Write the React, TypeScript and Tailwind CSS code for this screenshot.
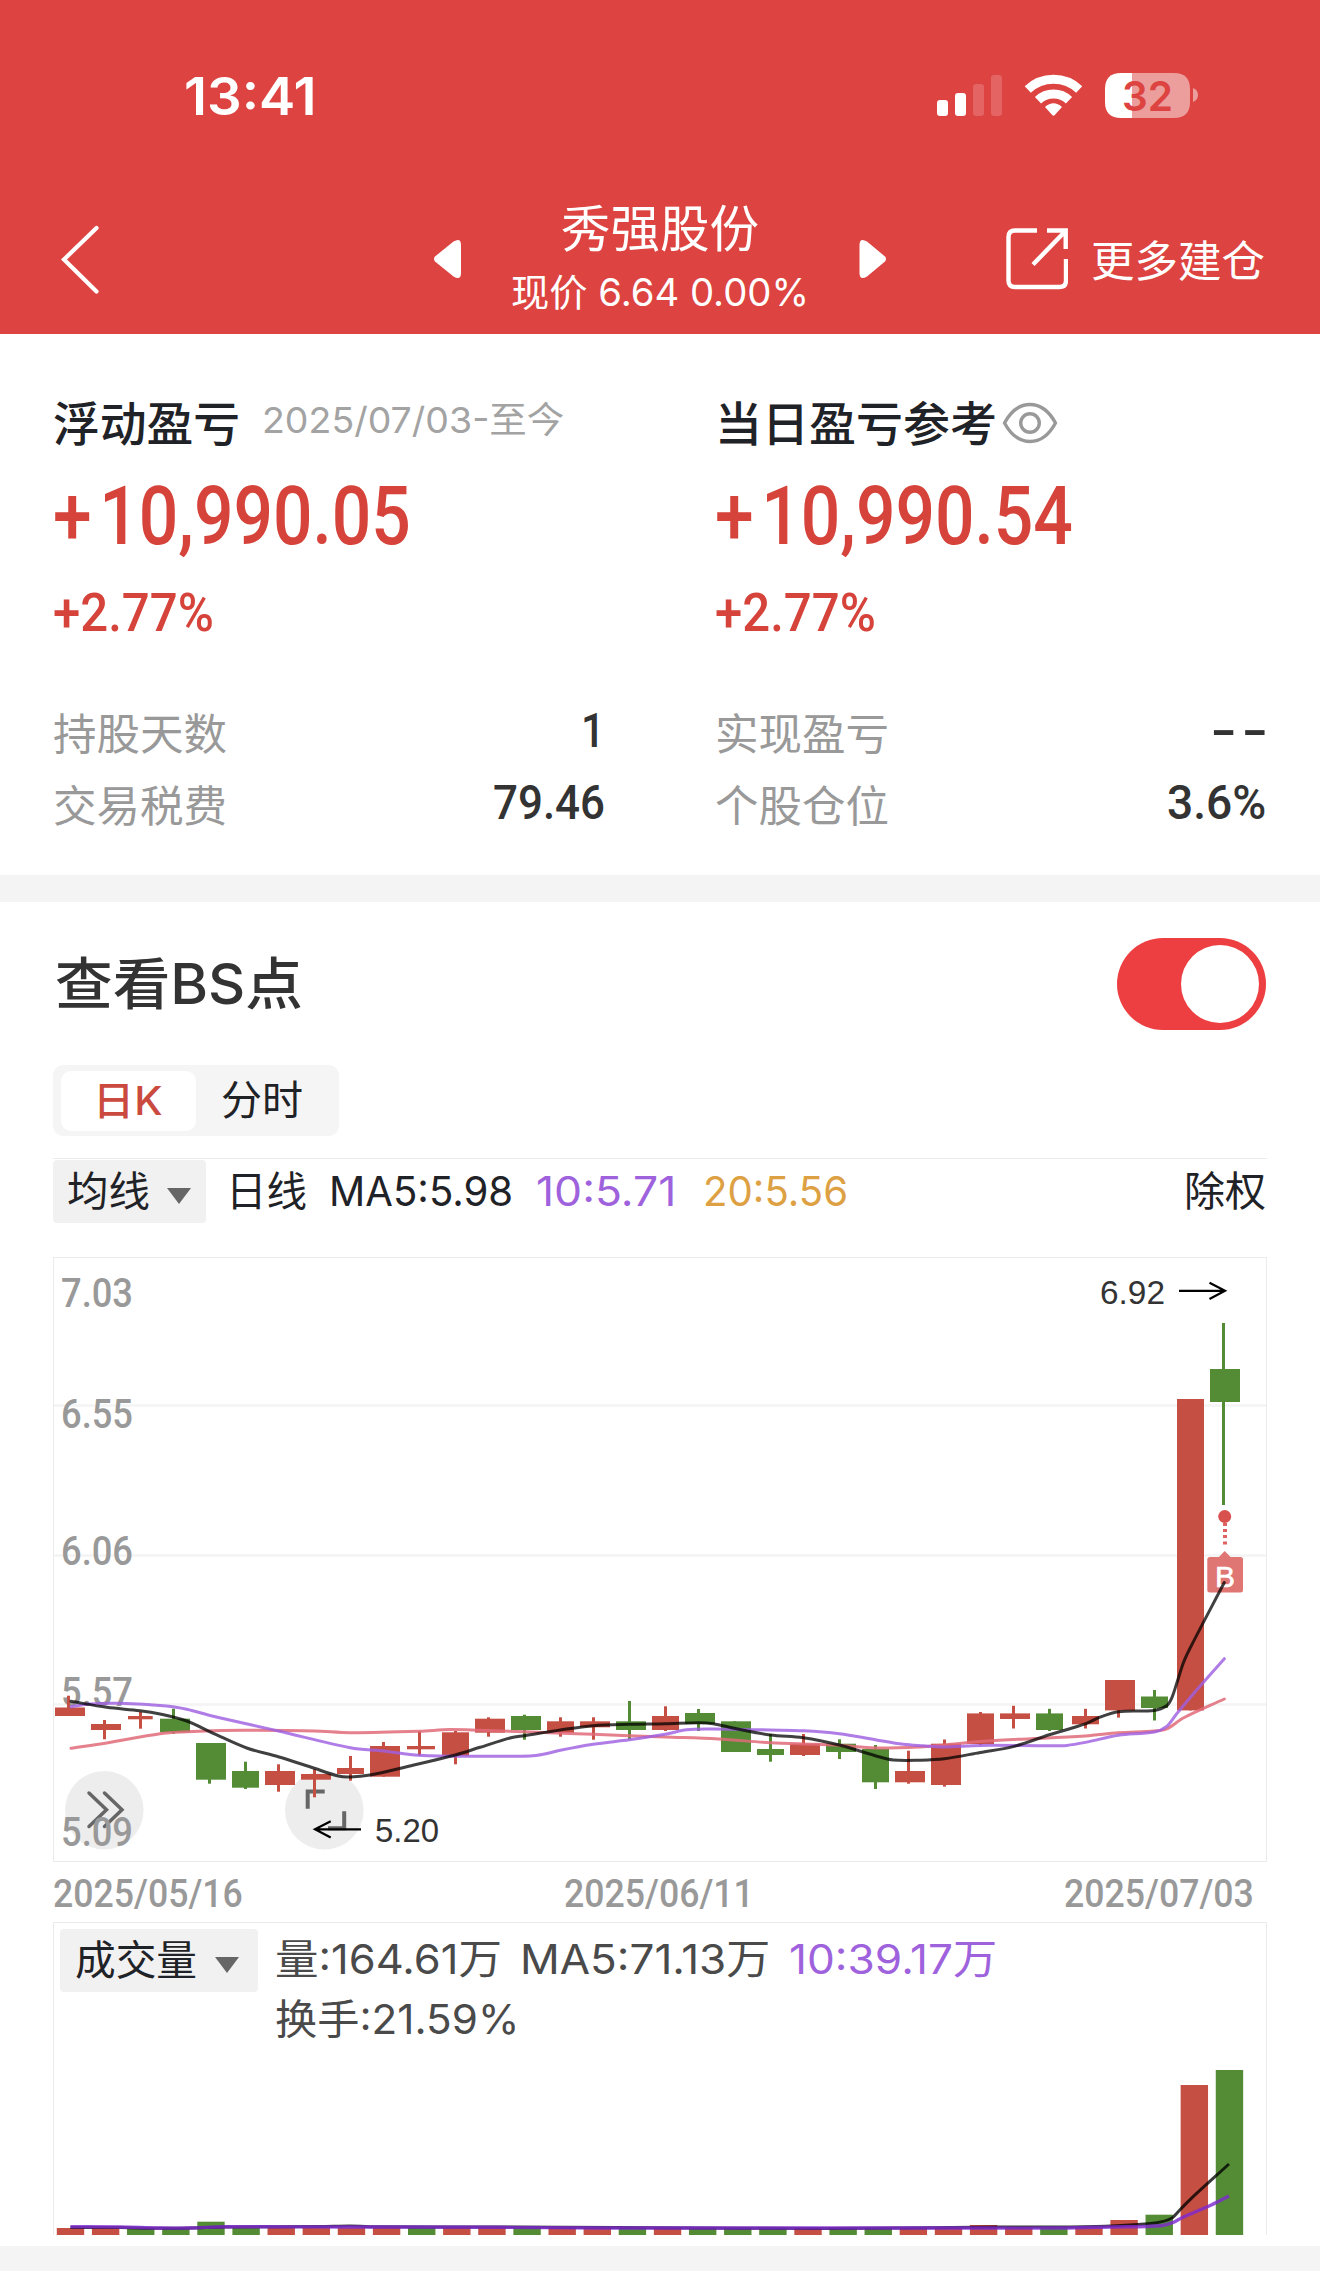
import { useLayoutEffect, useRef, useState } from "react";
import type { ReactNode } from "react";

const RED = "#c54f43";
const GREEN = "#548c36";

const CJK = "font-['Noto_Sans_CJK_SC',sans-serif]";
const MIX = "font-['Inter','Noto_Sans_CJK_SC',sans-serif]";
const DIN = "font-['Roboto',sans-serif]";

/** Single line of text condensed or widened so that it fills its box. */
function Fit({ className, children }: { className: string; children: ReactNode }) {
  const box = useRef<HTMLSpanElement>(null);
  const text = useRef<HTMLSpanElement>(null);
  const [scale, setScale] = useState(1);
  useLayoutEffect(() => {
    if (box.current && text.current) setScale(box.current.clientWidth / text.current.offsetWidth);
  }, []);
  return (
    <span ref={box} className={`block shrink-0 whitespace-nowrap ${className}`}>
      <span ref={text} className="inline-block origin-left" style={{ transform: `scaleX(${scale})` }}>
        {children}
      </span>
    </span>
  );
}

type Candle = [string, number, number, number, number, number, number, number];

// colour, body left, body right, body top, body bottom, wick x, wick top, wick bottom
const candles: Candle[] = [
  ["r", 55, 85, 1707.5, 1716, 68.5, 1695.7, 1716],
  ["r", 91, 121, 1724, 1730, 104.5, 1720, 1739.3],
  ["r", 128, 152.7, 1716, 1719.3, 140.5, 1712, 1728.7],
  ["g", 160, 190, 1718.7, 1732.3, 173.5, 1708.7, 1733.7],
  ["g", 196, 226, 1743, 1779.7, 209.5, 1743, 1783.7],
  ["g", 232, 259, 1771, 1787.7, 245.5, 1761.7, 1789],
  ["r", 265, 295, 1771, 1785, 278.5, 1764.3, 1791.7],
  ["r", 301, 331, 1774, 1779.7, 314.5, 1769.3, 1797.3],
  ["r", 337, 364, 1768, 1774, 350.5, 1756, 1780.7],
  ["r", 370, 400, 1746, 1776.7, 383.5, 1742, 1776.7],
  ["r", 407, 435, 1746, 1749.3, 419.5, 1731.3, 1755.7],
  ["r", 442, 469, 1732.3, 1755.7, 455.5, 1731, 1764.3],
  ["r", 475, 505, 1718.7, 1732.7, 488.5, 1717.3, 1736.7],
  ["g", 511, 541, 1716, 1730, 524.5, 1714.7, 1739.7],
  ["r", 547, 574, 1721.3, 1732.7, 560.5, 1717.3, 1736.7],
  ["r", 580, 610, 1721.3, 1727.3, 593.5, 1717.3, 1739.7],
  ["g", 616, 646, 1721.3, 1730, 629.5, 1701, 1739.3],
  ["r", 652, 679, 1716, 1730, 665.5, 1706.3, 1731],
  ["g", 685, 715, 1713, 1724, 698.5, 1709, 1731],
  ["g", 721, 751, 1721.3, 1752, 734.5, 1721.3, 1752],
  ["g", 757, 784, 1749, 1755, 770.5, 1734, 1761.7],
  ["r", 790, 820, 1743.7, 1755, 803.5, 1734, 1756],
  ["g", 826, 856, 1743.7, 1752, 839.5, 1739.3, 1759],
  ["g", 862, 889, 1749, 1782.3, 875.5, 1745, 1789],
  ["r", 895, 925, 1771, 1782.3, 908.5, 1750.7, 1783.7],
  ["r", 931, 961, 1743.7, 1785, 944.5, 1739.5, 1786.6],
  ["r", 967, 994, 1713.4, 1744, 980.5, 1712, 1745],
  ["r", 1000, 1030, 1713.4, 1719, 1013.5, 1705.8, 1728.5],
  ["g", 1036, 1063, 1713.4, 1730, 1049.5, 1708.8, 1731],
  ["r", 1072, 1099, 1716, 1724.3, 1085.5, 1708.8, 1728.5],
  ["r", 1105, 1135, 1680, 1710.4, 1118.5, 1680, 1717.6],
  ["g", 1141, 1168, 1696.5, 1708, 1154.5, 1690, 1720.5],
  ["r", 1177, 1204, 1399, 1710.4, 1190.5, 1399, 1710.4],
  ["g", 1210, 1240, 1369, 1402, 1223.5, 1323, 1505],
];

const ma5 = [71,1701.3,106.7,1707.3,140,1710.7,160,1714,186.7,1721,213.3,1733.3,246.7,1748,278.3,1756.7,314.3,1768.3,338.3,1776,350.3,1777,370,1775,406.7,1766.7,455.3,1755,480,1747.3,511,1737.7,524.3,1735.7,560.3,1730,593.3,1725.7,629.3,1724.3,665.3,1723.7,698.3,1722.7,713.3,1723.7,734.3,1728.3,770.3,1735,803.3,1737.7,839.3,1745,875.3,1755.7,893.3,1760,920,1760.2,944.3,1758.8,980.3,1752.5,1013.3,1746.6,1049.3,1734.8,1085.3,1723.9,1100,1717.2,1118.3,1711.7,1154.3,1710.4,1166.7,1705.8,1171.7,1698.2,1176.7,1683.5,1183.3,1663,1190.3,1647.7,1224.3,1582.5];
const ma10 = [71,1706.7,90,1704,120,1703.3,166.7,1706,186.7,1709.3,213.3,1716.3,278.3,1731,350.3,1747.7,383.3,1751,419.3,1755.3,480,1756.3,530,1756,543.3,1754.3,560.3,1750.3,593.3,1744.3,629.3,1739.7,665.3,1734.3,686.7,1729.7,713.3,1729,770.3,1730,803.3,1730.7,839.3,1733.7,875.3,1739.7,903.3,1744.3,923.3,1745.8,944.3,1747,980.3,1745.4,1049.3,1745.8,1066.7,1745.4,1085.3,1742.4,1118.3,1735.3,1154.3,1731.9,1166.7,1726.4,1176.7,1713.8,1190.3,1697.4,1224.3,1658.7];
const ma20 = [71,1748.3,106.7,1743,160,1733.7,186.7,1731.7,213.3,1730.7,246.7,1730.3,314.3,1731,350.3,1732.7,419.3,1731.3,450,1729.5,480,1730.2,524.3,1731.7,593.3,1734.3,665.3,1737,718.3,1739,770.3,1742.7,813.3,1744.3,839.3,1745.3,875.3,1748,920,1747,944.3,1745,980.3,1741.6,1013.3,1739.5,1085.3,1736,1118.3,1732.7,1154.3,1731,1166.7,1729,1183.3,1718,1224.3,1699];

const volColors = "rrggggrrrrgrrgrrgrgggrggrrrrgrrgrg".split("");
const volTops: Record<number, number> = { 4: 2221.7, 26: 2225, 30: 2220, 31: 2214.7, 32: 2085, 33: 2070 };
const vol5 = [70.5,2227.5,120,2227.5,160,2228.3,190,2228,225,2227,320,2226.6,350,2226,380,2226.8,500,2227,700,2228,830,2228.5,1000,2227,1060,2227,1110,2226,1156.6,2222.7,1171.4,2218.3,1179.8,2210,1190.3,2199.3,1229,2164];
const vol10 = [70.5,2226.7,120,2227,160,2228,190,2228,225,2226.8,350,2227,500,2227.3,600,2228,830,2228,950,2228,1060,2228,1110,2227,1161,2225.7,1172.6,2222.7,1182,2217.7,1211.3,2205,1229,2196];

/** Smooth curve through a flat list of x, y pairs. */
function curve(p: number[]) {
  const n = p.length / 2;
  const at = (i: number) => {
    const k = Math.max(0, Math.min(n - 1, i));
    return [p[2 * k], p[2 * k + 1]];
  };
  let d = `M${p[0]} ${p[1]}`;
  for (let i = 0; i < n - 1; i++) {
    const [a, b, c, e] = [at(i - 1), at(i), at(i + 1), at(i + 2)];
    const h = (c[0] - b[0]) / 3;
    const m1 = (c[1] - a[1]) / (c[0] - a[0]);
    const m2 = (e[1] - b[1]) / (e[0] - b[0]);
    d += `C${b[0] + h} ${b[1] + m1 * h} ${c[0] - h} ${c[1] - m2 * h} ${c[0]} ${c[1]}`;
  }
  return d;
}

function StatusIcons() {
  return (
    <svg className="h-[60px] w-[262px] overflow-visible" viewBox="937 66 262 60">
      <g fill="#fff">
        <rect x="937" y="100" width="11" height="16" rx="3" />
        <rect x="955" y="93" width="11" height="23" rx="3" />
        <rect x="973" y="84" width="11" height="32" rx="3" opacity=".18" />
        <rect x="991" y="75" width="11" height="41" rx="3" opacity=".18" />
      </g>
      <g fill="none" stroke="#fff" strokeWidth="9">
        <path d="M1027.8 89.500 A37.500 37.500 0 0 1 1079.200 89.500" />
        <path d="M1038 100.300 A22.500 22.500 0 0 1 1069 100.300" />
      </g>
      <path d="M1045 107 Q1053.500 99.500 1062 107 L1054.800 115 Q1053.500 116.600 1052.200 115 Z" fill="#fff" />
      <path d="M1132 73H1174Q1190 73 1190 89V102Q1190 118 1174 118H1132Z" fill="#eb9e9c" />
      <path d="M1132 73H1121Q1105 73 1105 89V102Q1105 118 1121 118H1132Z" fill="#fff" />
      <path d="M1193 88 Q1198 90 1198 95 Q1198 100 1193 102 Z" fill="#eb9e9c" />
      <text x="1122" y="110.500" textLength="51" lengthAdjust="spacingAndGlyphs" fontFamily="Inter, sans-serif" fontWeight="600" fontSize="41" fill="#dd4340">
        32
      </text>
    </svg>
  );
}

function Header() {
  return (
    <header className="h-[334px] bg-[#dd4340] text-white">
      <div className="flex h-[192px] items-center justify-between pr-[121px] pl-[184px]">
        <Fit className={`mt-[2px] w-[133px] text-[52px] leading-[60px] font-semibold ${MIX}`}>13:41</Fit>
        <StatusIcons />
      </div>
      <div className="flex h-[134px] items-center">
        <svg className="ml-[58px] h-[70px] w-[44px]" viewBox="58 223 44 70" fill="none" stroke="#fff" strokeWidth="4.2" strokeLinecap="round">
          <path d="M96.500 227 L64 258.500 L96.500 290.500" />
        </svg>
        <svg className="ml-[331px] h-[40px] w-[28px]" viewBox="432 239 28 40">
          <path d="M434 256.500 L452.500 241.500 Q460 237 460 245 V273 Q460 281 452.500 276.500 L434 261.500 Q432 259 434 256.500Z" fill="#fff" />
        </svg>
        <div className="ml-[50px] flex w-[298px] flex-col items-center">
          <Fit className={`w-[198px] text-[49.500px] leading-[66px] ${CJK}`}>秀强股份</Fit>
          <Fit className={`w-[298px] text-[38px] leading-[66px] ${MIX}`}>现价 6.64 0.00%</Fit>
        </div>
        <svg className="ml-[50px] h-[40px] w-[28px]" viewBox="859 239 28 40">
          <path d="M885 256.500 L867 241.500 Q859.500 237 859.500 245 V273 Q859.500 281 867 276.500 L885 261.500 Q887 259 885 256.500Z" fill="#fff" />
        </svg>
        <svg className="ml-[119px] h-[62px] w-[62px]" viewBox="1006 229 62 62" fill="none" stroke="#fff" strokeWidth="4.4">
          <path d="M1037 231.500 H1015 Q1008.500 231.500 1008.500 238 V281.500 Q1008.500 288 1015 288 H1059.500 Q1066 288 1066 281.500 V260" />
          <path d="M1047 231.500 H1065.700 V250 M1065 232.500 L1033 265.500" />
        </svg>
        <Fit className={`ml-[23px] w-[174px] text-[43.500px] leading-[60px] ${CJK}`}>更多建仓</Fit>
      </div>
    </header>
  );
}

function StatRow({ label, children }: { label: string; children: ReactNode }) {
  return (
    <div className="flex h-[70px] items-center justify-between text-[#333]">
      <Fit className={`w-[174px] text-[43.500px] leading-[60px] text-[#999] ${CJK}`}>{label}</Fit>
      <div className="pb-0.5">{children}</div>
    </div>
  );
}

function Profit({ amount }: { amount: string }) {
  return (
    <div className="text-[#d5433b]">
      <Fit className={`mt-[20px] w-[358px] text-[82px] leading-[90px] font-medium ${DIN}`}>
        <span className="mr-[9px]">+</span>
        {amount}
      </Fit>
      <Fit className={`mt-[22px] w-[161px] text-[54px] leading-[60px] font-medium ${DIN}`}>+2.77%</Fit>
    </div>
  );
}

function Summary() {
  return (
    <section className="grid h-[541px] grid-cols-[552px_552px] gap-x-[110px] px-[53px] pt-[57px]">
      <div>
        <div className="flex h-[60px] items-center">
          <Fit className={`w-[187px] text-[47px] leading-[60px] font-medium text-[#1f2226] ${CJK}`}>浮动盈亏</Fit>
          <Fit className={`mb-0.5 ml-[22px] w-[302px] text-[36px] leading-[50px] text-[#a3a3a3] ${MIX}`}>2025/07/03-至今</Fit>
        </div>
        <Profit amount="10,990.05" />
        <div className="mt-[54px] flex flex-col gap-0.5">
          <StatRow label="持股天数">
            <Fit className={`w-[24px] text-[49px] leading-[60px] font-medium ${DIN}`}>1</Fit>
          </StatRow>
          <StatRow label="交易税费">
            <Fit className={`w-[112px] text-[49px] leading-[60px] font-medium ${DIN}`}>79.46</Fit>
          </StatRow>
        </div>
      </div>
      <div>
        <div className="flex h-[60px] items-center">
          <Fit className={`w-[282px] text-[47px] leading-[60px] font-medium text-[#1f2226] ${CJK}`}>当日盈亏参考</Fit>
          <svg className="mt-1 ml-[5px] h-[42px] w-[56px]" viewBox="1002 402 56 42" fill="none" stroke="#999" strokeWidth="3.4">
            <path d="M1004.500 423 C1011 411 1020 404.500 1030 404.500 S1049 411 1055.500 423 C1049 435 1040 441.500 1030 441.500 S1011 435 1004.500 423Z" strokeLinejoin="round" />
            <circle cx="1030" cy="423" r="9.300" />
          </svg>
        </div>
        <Profit amount="10,990.54" />
        <div className="mt-[54px] flex flex-col gap-0.5">
          <StatRow label="实现盈亏">
            <Fit className={`mr-[-6px] w-[62px] text-[52px] leading-[60px] font-medium tracking-[4px] ${DIN}`}>--</Fit>
          </StatRow>
          <StatRow label="个股仓位">
            <Fit className={`mr-px w-[99px] text-[49px] leading-[60px] font-medium ${DIN}`}>3.6%</Fit>
          </StatRow>
        </div>
      </div>
    </section>
  );
}

function Caret() {
  return (
    <svg className="mt-2 h-[16px] w-[24px]" viewBox="0 0 24 16">
      <path d="M0 0H24L12 16Z" fill="#666" />
    </svg>
  );
}

function Axis({ y, children }: { y: number; children: string }) {
  return (
    <text x="61" y={y} textLength="72" lengthAdjust="spacingAndGlyphs" fontFamily="Roboto, sans-serif" fontWeight="500" fontSize="40.500" fill="#999">
      {children}
    </text>
  );
}

function PriceChart() {
  return (
    <svg className="block h-[605px] w-[1214px]" viewBox="53 1257 1214 605">
      <g stroke="#f4f4f4" strokeWidth="2.500">
        <path d="M53 1405.500H1267M53 1555.500H1267M53 1704.500H1267" />
      </g>
      <rect x="53.500" y="1257.500" width="1213" height="604" fill="none" stroke="#ebebeb" strokeWidth="1" />
      <circle cx="104.300" cy="1810.300" r="39.300" fill="#ededed" />
      <circle cx="324.300" cy="1810.300" r="39.300" fill="#ededed" />
      <g fill="none" stroke="#666" strokeWidth="3.500" strokeLinecap="round">
        <path d="M89 1793 L106.500 1809.700 L89 1826.500 M104.500 1793 L122 1809.700 L104.500 1826.500" />
      </g>
      <g fill="none" stroke="#666" strokeWidth="4">
        <path d="M307.700 1808.700V1791.500H324.700M344.200 1811.300V1828.300H328" />
      </g>
      <Axis y={1307}>7.03</Axis>
      <Axis y={1428}>6.55</Axis>
      <Axis y={1565}>6.06</Axis>
      <Axis y={1705.500}>5.57</Axis>
      <Axis y={1846}>5.09</Axis>
      {candles.map(([c, x0, x1, t, b, wx, wt, wb], i) => (
        <g key={i} fill={c === "r" ? RED : GREEN}>
          <rect x={x0} y={t} width={x1 - x0} height={b - t} />
          <rect x={wx - 1.5} y={wt} width="3" height={wb - wt} />
        </g>
      ))}
      <g fill="#d9514f">
        <circle cx="1224.700" cy="1516.500" r="6.500" />
        <path d="M1223 1523h4v3h-4zM1223 1529h4v3h-4zM1223 1535h4v3h-4zM1223 1541.500h4v3h-4z" opacity=".9" />
      </g>
      <path d="M1210 1557H1219L1224.700 1551L1230.500 1557H1240.500Q1243 1557 1243 1559.500V1590Q1243 1592.500 1240.500 1592.500H1210Q1207.300 1592.500 1207.300 1590V1559.500Q1207.300 1557 1210 1557Z" fill="#df7674" />
      <text x="1225" y="1587" textAnchor="middle" fontFamily="Liberation Sans, sans-serif" fontSize="30" fill="#fff" stroke="#fff" strokeWidth=".6">
        B
      </text>
      <g fill="none" strokeWidth="3" strokeLinecap="round">
        <path d={curve(ma20)} stroke="#e16a79" opacity=".85" />
        <path d={curve(ma10)} stroke="#9f5fe0" opacity=".82" />
        <path d={curve(ma5)} stroke="#000" opacity=".75" />
      </g>
      <g fill="none" stroke="#000" strokeWidth="2.200">
        <path d="M1179 1290.800H1225M1209.500 1282.800L1225 1290.800L1209.500 1299" />
        <path d="M361 1829.300H315M330.700 1821.300L315 1829.300L330.700 1837.500" />
      </g>
      <g fontFamily="Liberation Sans, sans-serif" fontSize="32.500" fill="#333">
        <text x="1100" y="1304" textLength="65" lengthAdjust="spacingAndGlyphs">6.92</text>
        <text x="375" y="1842" textLength="64" lengthAdjust="spacingAndGlyphs">5.20</text>
      </g>
    </svg>
  );
}

function VolumeChart() {
  return (
    <svg className="block h-[180px] w-[1212px]" viewBox="54 2055 1212 180">
      {volColors.map((c, i) => {
        const top = volTops[i] ?? 2228;
        return <rect key={i} x={56.8 + i * 35.12} y={top} width="27.400" height={2235 - top} fill={c === "r" ? RED : GREEN} />;
      })}
      <g fill="none" strokeWidth="3">
        <path d={curve(vol5)} stroke="#000" opacity=".78" />
        <path d={curve(vol10)} stroke="#7e2ad0" opacity=".82" strokeWidth="3.400" />
      </g>
    </svg>
  );
}

function ChartSection() {
  const num = `text-[41px] leading-[60px] ${MIX}`;
  const date = `text-[39px] leading-[56px] font-medium ${DIN}`;
  return (
    <section className="px-[53px] pt-[36px]">
      <div className="flex h-[92px] items-center justify-between">
        <Fit className={`ml-[2px] w-[248px] text-[56px] leading-[80px] font-medium text-[#333] ${MIX}`}>查看BS点</Fit>
        <div className="mr-px flex h-[92px] w-[149px] items-center justify-end rounded-full bg-[#ed3f41] pr-[7px]">
          <div className="size-[78px] rounded-full bg-white" />
        </div>
      </div>
      <div className="mt-[35px] flex h-[71px] w-[286px] items-center rounded-[10px] bg-[#f5f5f5] pl-2">
        <div className="flex h-[60px] w-[135px] items-center rounded-[10px] bg-white pl-[32px] font-medium text-[#cb4a40]">
          <Fit className={`w-[70px] text-[40px] leading-[60px] ${MIX}`}>日K</Fit>
        </div>
        <Fit className={`mt-px ml-[25px] w-[82px] text-[40.500px] leading-[60px] text-[#1f2226] ${MIX}`}>分时</Fit>
      </div>
      <div className="mt-[22px] border-t border-[#ebebeb]" />
      <div className="mt-px flex h-[63px] items-center text-[#1f2226]">
        <div className="flex h-[63px] w-[153px] items-center rounded bg-[#f1f1f1] pl-[14px]">
          <Fit className={`mb-0.5 w-[83px] ${num}`}>均线</Fit>
          <div className="ml-[17px]">
            <Caret />
          </div>
        </div>
        <div className="mb-0.5 flex flex-1">
          <Fit className={`ml-[20px] w-[81px] ${num}`}>日线</Fit>
          <Fit className={`ml-[22px] w-[184px] ${num}`}>MA5:5.98</Fit>
          <Fit className={`ml-[23px] w-[140px] text-[#9f62dd] ${num}`}>10:5.71</Fit>
          <Fit className={`ml-[27px] w-[145px] text-[#dda144] ${num}`}>20:5.56</Fit>
          <Fit className={`mr-px ml-auto w-[82px] ${num}`}>除权</Fit>
        </div>
      </div>
      <div className="mt-[34px]">
        <PriceChart />
      </div>
      <div className="flex h-[60px] items-center pt-1 text-[#999]">
        <Fit className={`w-[190px] ${date}`}>2025/05/16</Fit>
        <Fit className={`ml-[321px] w-[190px] ${date}`}>2025/06/11</Fit>
        <Fit className={`ml-[310px] w-[190px] ${date}`}>2025/07/03</Fit>
      </div>
      <div className="flex h-[313px] flex-col justify-between border-x border-t border-[#ebebeb]">
        <div className="flex pt-[6px] pl-[6px]">
          <div className="flex h-[63px] w-[198px] items-center rounded bg-[#f1f1f1] pl-[15px] text-[#1f2226]">
            <Fit className={`mb-0.5 w-[122px] ${num}`}>成交量</Fit>
            <div className="ml-[18px]">
              <Caret />
            </div>
          </div>
          <div className="ml-[17px] text-[#4a4a4a]">
            <div className="flex">
              <Fit className={`w-[227px] ${num}`}>量:164.61万</Fit>
              <Fit className={`ml-[18px] w-[250px] ${num}`}>MA5:71.13万</Fit>
              <Fit className={`ml-[19px] w-[208px] text-[#9f62dd] ${num}`}>10:39.17万</Fit>
            </div>
            <Fit className={`w-[244px] ${num}`}>换手:21.59%</Fit>
          </div>
        </div>
        <VolumeChart />
      </div>
    </section>
  );
}

export default function App() {
  return (
    <main className="h-[2271px] w-[1320px] overflow-hidden bg-white">
      <Header />
      <Summary />
      <div className="h-[27px] bg-[#f4f4f4]" />
      <ChartSection />
      <div className="mt-[11px] h-[25px] bg-[#f4f4f4]" />
    </main>
  );
}
